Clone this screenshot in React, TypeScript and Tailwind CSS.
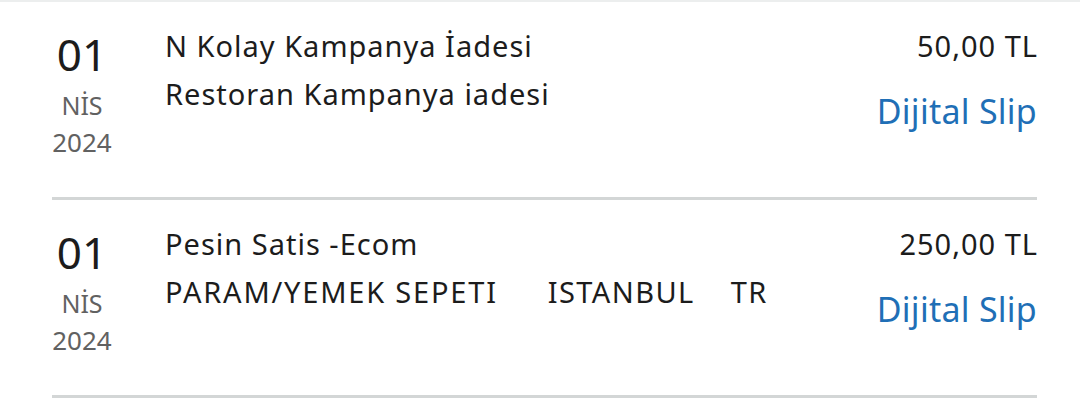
import React from "react";

type Row = {
  day: string;
  month: string;
  year: string;
  title: string;
  sub: React.ReactNode;
  amount: string;
};

const rows: Row[] = [
  {
    day: "01",
    month: "NİS",
    year: "2024",
    title: "N Kolay Kampanya İadesi",
    sub: <span>Restoran Kampanya iadesi</span>,
    amount: "50,00 TL",
  },
  {
    day: "01",
    month: "NİS",
    year: "2024",
    title: "Pesin Satis -Ecom",
    sub: (
      <span className="flex">
        <span className="tracking-[1.8px]">PARAM/YEMEK SEPETI</span>
        <span className="ml-[50px] tracking-[1.4px]">ISTANBUL</span>
        <span className="ml-[36px] tracking-[1.4px]">TR</span>
      </span>
    ),
    amount: "250,00 TL",
  },
];

export default function App() {
  return (
    <div
      className="w-[1080px] h-[402px] bg-white border-t-2 border-[#eceeee] overflow-hidden"
      style={{ fontFamily: '"Noto Sans", "Open Sans", sans-serif' }}
    >
      <div className="pl-[52px] pr-[43px]">
        {rows.map((r, i) => (
          <div
            key={i}
            className="flex h-[198px] border-b-[3px] border-[#d3d6d6]"
          >
            <div className="w-[60px] flex flex-col items-center pt-[30px] text-center">
              <div className="text-[44px] leading-[44px] text-[#1c1c1c]">{r.day}</div>
              <div className="mt-[17px] text-[25px] leading-[25px] text-[#616161]">{r.month}</div>
              <div className="mt-[11px] text-[26px] leading-[26px] text-[#616161]">{r.year}</div>
            </div>
            <div className="ml-[53px] flex-1 pt-[20px] text-[29px] leading-[48px] tracking-[1px] text-[#1c1c1c]">
              <div>{r.title}</div>
              <div>{r.sub}</div>
            </div>
            <div className="flex flex-col items-end pt-[20px]">
              <div className="text-[29px] leading-[48px] tracking-[1px] mr-[-1px] text-[#1c1c1c]">{r.amount}</div>
              <div className="mt-[17px] text-[34px] leading-[48px] tracking-[0.25px] text-[#1f6fb6]">Dijital Slip</div>
            </div>
          </div>
        ))}
      </div>
    </div>
  );
}
